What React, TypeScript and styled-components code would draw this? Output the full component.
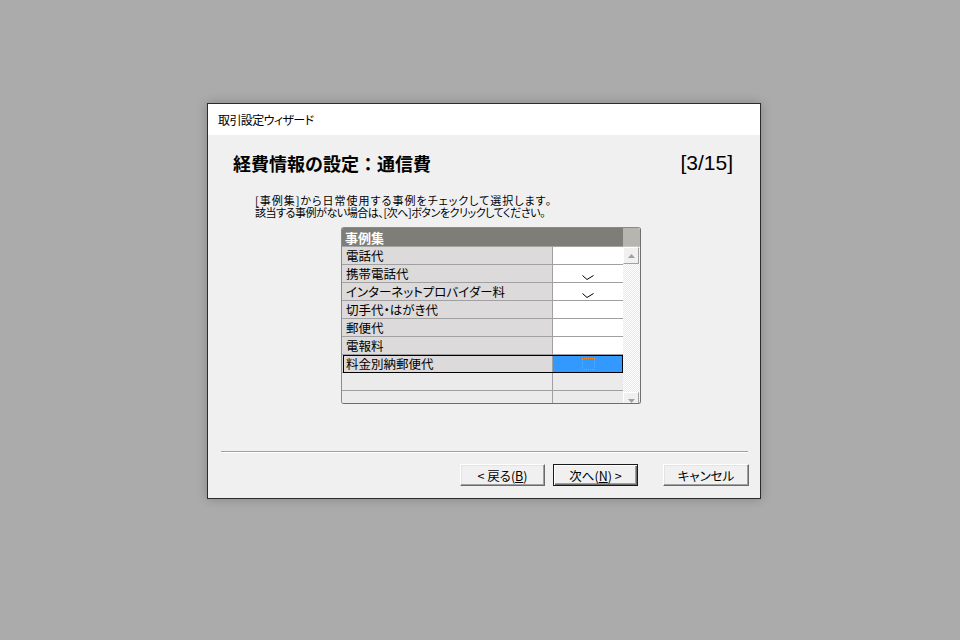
import React from 'react';
import styled, { createGlobalStyle } from 'styled-components';

const GlobalStyle = createGlobalStyle`
  html, body { margin: 0; padding: 0; background: #ababab; }
  body { font-family: "Noto Sans CJK JP", "Noto Sans", sans-serif; color: #000; }
  * { box-sizing: border-box; }
`;

const Screen = styled.div`
  width: 960px;
  height: 640px;
  padding: 103px 0 0 207px;
  background: #ababab;
`;

const Dialog = styled.div`
  width: 554px;
  height: 396px;
  border: 1px solid #2b2b2b;
  background: #f0f0f0;
  box-shadow: 0 0 10px rgba(0, 0, 0, 0.22);
  display: flex;
  flex-direction: column;
`;

const TitleBar = styled.div`
  height: 31px;
  background: #fff;
  display: flex;
  align-items: center;
  padding-left: 10px;
  font-size: 12px;
  letter-spacing: -0.6px;
  font-feature-settings: "palt";
`;

const Body = styled.div`
  flex: 1;
  display: flex;
  flex-direction: column;
`;

const HeadingRow = styled.div`
  display: flex;
  justify-content: space-between;
  align-items: center;
  padding: 17px 27px 0 25px;
  height: 39px;
`;

const Heading = styled.h1`
  margin: 0;
  font-size: 18px;
  line-height: 22px;
  font-weight: 700;
`;

const Step = styled.span`
  font-family: "Liberation Sans", Arial, sans-serif;
  font-size: 21px;
  line-height: 22px;
`;

const Instructions = styled.div`
  margin: 20px 0 0 47px;
  font-size: 11px;
  line-height: 12px;
  font-feature-settings: "palt";
`;

const InstructionLine = styled.div<{ $spacing: number }>`
  letter-spacing: ${(p) => p.$spacing}px;
  white-space: nowrap;
  height: 12px;
`;

const Grid = styled.div`
  margin: 9px 0 0 133px;
  width: 300px;
  height: 177px;
  border: 1px solid #8a8a8a;
  border-right-color: #6e6e6e;
  border-bottom-color: #6e6e6e;
  border-radius: 3px;
  display: grid;
  grid-template-columns: 281px 17px;
  overflow: hidden;
  background: #ebebeb;
`;

const Table = styled.div`
  display: flex;
  flex-direction: column;
  font-feature-settings: "palt";
`;

const HeaderRow = styled.div`
  height: 19px;
  flex: none;
  background: #7f7d78;
  border-bottom: 1px solid #a5a5a5;
  color: #fff;
  font-weight: 700;
  display: flex;
  align-items: center;
  padding-left: 3px;
  font-size: 13px;
  line-height: 17px;
`;

const Row = styled.div<{ $selected?: boolean }>`
  position: relative;
  height: 18px;
  flex: none;
  display: grid;
  grid-template-columns: 211px 70px;
  grid-template-rows: 18px;
  &::after {
    content: "";
    display: ${(p) => (p.$selected ? 'block' : 'none')};
    position: absolute;
    left: 1px;
    right: 0;
    top: 0;
    bottom: 0;
    border: 1px solid #000;
    pointer-events: none;
  }
`;

const NameCell = styled.div<{ $empty?: boolean }>`
  background: ${(p) => (p.$empty ? '#ebebeb' : '#dcdada')};
  border-right: 1px solid #a0a0a0;
  border-bottom: 1px solid #a0a0a0;
  display: flex;
  align-items: center;
  padding-left: 4px;
  white-space: nowrap;
  overflow: hidden;
  font-size: 12.5px;
  line-height: 17px;
`;

const CheckCell = styled.div<{ $empty?: boolean; $selected?: boolean }>`
  background: ${(p) => (p.$selected ? '#3399ff' : p.$empty ? '#ebebeb' : '#ffffff')};
  border-bottom: 1px solid #a0a0a0;
  overflow: hidden;
  display: flex;
  justify-content: center;
  align-items: ${(p) => (p.$selected ? 'center' : 'flex-end')};
  padding-bottom: ${(p) => (p.$selected ? '0' : '2px')};
`;

const FocusBox = styled.div`
  flex: none;
  width: 13px;
  height: 12px;
  margin: 1px 0 0 1px;
  border: 1px dotted #ff8a1a;
`;

const ScrollBar = styled.div`
  display: flex;
  flex-direction: column;
  background: repeating-conic-gradient(#ffffff 0 25%, #e8e8e8 0 50%) 0 0 / 2px 2px;
`;

const ScrollHead = styled.div`
  height: 19px;
  flex: none;
  background: #b7b5b0;
  border-bottom: 1px solid #c8c8c8;
`;

const ScrollButton = styled.div`
  height: 17px;
  width: 16px;
  flex: none;
  background: #f0f0f0;
  border: 1px solid;
  border-color: #ffffff #a0a0a0 #a0a0a0 #ffffff;
  display: flex;
  align-items: center;
  justify-content: center;
`;

const Track = styled.div`
  flex: 1;
`;

const Separator = styled.div`
  margin: 47px 12px 0 13px;
  height: 2px;
  border-top: 1px solid #a0a0a0;
  border-bottom: 1px solid #ffffff;
`;

const ButtonRow = styled.div`
  display: flex;
  justify-content: flex-end;
  padding: 11px 11px 0 0;
`;

const Button = styled.div<{ $default?: boolean; $gap?: number; $width?: number }>`
  width: ${(p) => p.$width ?? 85}px;
  height: 22px;
  margin-left: ${(p) => p.$gap ?? 0}px;
  background: #f0f0f0;
  border: 1px solid;
  border-color: ${(p) => (p.$default ? '#1a1a1a' : '#ffffff #6a6a6a #6a6a6a #ffffff')};
  box-shadow: ${(p) =>
    p.$default
      ? 'inset 1px 1px #ffffff, inset -1px -1px #6a6a6a, inset -2px -2px #a0a0a0'
      : 'inset -1px -1px #a0a0a0, inset 1px 1px #e3e3e3'};
  display: flex;
  align-items: center;
  justify-content: center;
  font-size: 12.5px;
  font-feature-settings: "palt";
  white-space: pre;
  u { text-decoration-thickness: 1px; text-underline-offset: 1px; }
`;

const Check = () => (
  <svg width="12" height="5" viewBox="0 0 12 5">
    <polyline points="0.5,0.5 5,4.5 11.5,0.5" fill="none" stroke="#000" strokeWidth="1" />
  </svg>
);

const Arrow = ({ up }: { up?: boolean }) => (
  <svg width="7" height="4" viewBox="0 0 7 4">
    <polygon points={up ? '3.5,0 7,4 0,4' : '0,0 7,0 3.5,4'} fill="#a0a0a0" />
  </svg>
);

const rows = [
  { name: '電話代', checked: false },
  { name: '携帯電話代', checked: true },
  { name: 'インターネットプロバイダー料', checked: true },
  { name: '切手代・はがき代', checked: false },
  { name: '郵便代', checked: false },
  { name: '電報料', checked: false },
  { name: '料金別納郵便代', checked: false, selected: true },
];

export default function App() {
  return (
    <>
      <GlobalStyle />
      <Screen>
        <Dialog>
          <TitleBar>取引設定ウィザード</TitleBar>
          <Body>
            <HeadingRow>
              <Heading>経費情報の設定：通信費</Heading>
              <Step>[3/15]</Step>
            </HeadingRow>
            <Instructions>
              <InstructionLine $spacing={1}>[事例集]から日常使用する事例をチェックして選択します。</InstructionLine>
              <InstructionLine $spacing={-0.45}>該当する事例がない場合は、[次へ]ボタンをクリックしてください。</InstructionLine>
            </Instructions>
            <Grid>
              <Table>
                <HeaderRow>事例集</HeaderRow>
                {rows.map((r) => (
                  <Row key={r.name} $selected={r.selected}>
                    <NameCell>{r.name}</NameCell>
                    <CheckCell $selected={r.selected}>
                      {r.checked && <Check />}
                      {r.selected && <FocusBox />}
                    </CheckCell>
                  </Row>
                ))}
                <Row>
                  <NameCell $empty />
                  <CheckCell $empty />
                </Row>
                <Row>
                  <NameCell $empty />
                  <CheckCell $empty />
                </Row>
              </Table>
              <ScrollBar>
                <ScrollHead />
                <ScrollButton>
                  <Arrow up />
                </ScrollButton>
                <Track />
                <ScrollButton>
                  <Arrow />
                </ScrollButton>
              </ScrollBar>
            </Grid>
            <Separator />
            <ButtonRow>
              <Button>
                {'< 戻る('}<u>B</u>{')'}
              </Button>
              <Button $default $gap={8}>
                {'次へ('}<u>N</u>{') >'}
              </Button>
              <Button $gap={25} $width={86}>
                キャンセル
              </Button>
            </ButtonRow>
          </Body>
        </Dialog>
      </Screen>
    </>
  );
}
